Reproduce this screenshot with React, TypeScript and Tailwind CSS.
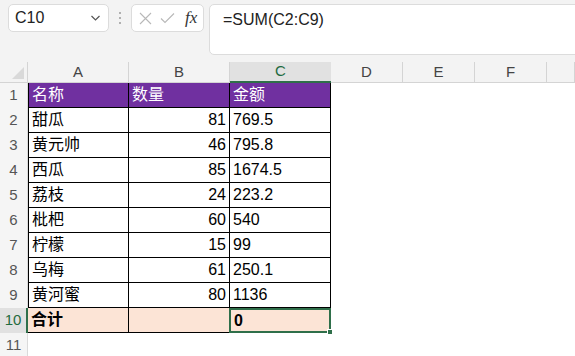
import React from 'react';

const font = '"Liberation Sans", "Noto Sans CJK SC", sans-serif';

type Row = { a: string; b: string; c: string };

const rows: Row[] = [
  { a: '甜瓜', b: '81', c: '769.5' },
  { a: '黄元帅', b: '46', c: '795.8' },
  { a: '西瓜', b: '85', c: '1674.5' },
  { a: '荔枝', b: '24', c: '223.2' },
  { a: '枇杷', b: '60', c: '540' },
  { a: '柠檬', b: '15', c: '99' },
  { a: '乌梅', b: '61', c: '250.1' },
  { a: '黄河蜜', b: '80', c: '1136' },
];

function RowHead({ n, active }: { n: number; active?: boolean }) {
  return (
    <div
      className={`h-[25px] flex items-center justify-center text-[15px] ${
        active
          ? 'bg-[#e1e1e1] text-[#1f6b40] border-r-2 border-[#2f6f4a]'
          : 'bg-[#f5f5f5] text-[#555] border-r border-[#dadada]'
      }`}
    >
      {n}
    </div>
  );
}

function Blank() {
  return <div className="h-[25px] bg-white" />;
}

export default function App() {
  return (
    <div className="w-[575px] h-[356px] overflow-hidden bg-white" style={{ fontFamily: font }}>
      {/* formula bar */}
      <div className="h-[62px] bg-[#f3f3f3] flex items-start pl-2 pt-1">
        <div className="shrink-0 w-[101px] h-[28px] bg-white border border-[#dcdcdc] rounded-[5px] flex items-center pl-[6px] pr-[7px] justify-between">
          <span className="text-[16px] text-[#222]">C10</span>
          <svg width="11" height="10" viewBox="0 0 11 10" fill="none" stroke="#555" strokeWidth="1.2">
            <path d="M1.5 3 L5.5 7 L9.5 3" />
          </svg>
        </div>
        <div className="shrink-0 w-[22px] h-[28px] flex flex-col items-center justify-center gap-[3px]">
          <span className="w-[2px] h-[2px] rounded-full bg-[#9a9a9a]" />
          <span className="w-[2px] h-[2px] rounded-full bg-[#9a9a9a]" />
          <span className="w-[2px] h-[2px] rounded-full bg-[#9a9a9a]" />
        </div>
        <div className="shrink-0 w-[73px] h-[28px] bg-white border border-[#dcdcdc] rounded-[5px] flex items-center pl-[7px] gap-[8px]">
          <svg width="13" height="13" viewBox="0 0 13 13" fill="none" stroke="#b8b8b8" strokeWidth="1.1">
            <path d="M1 1 L12 12 M12 1 L1 12" />
          </svg>
          <svg width="15" height="13" viewBox="0 0 15 13" fill="none" stroke="#b8b8b8" strokeWidth="1.1">
            <path d="M1 6.5 L5 10.5 L14 1.5" />
          </svg>
          <span className="text-[17px] italic text-[#333] ml-[2px]" style={{ fontFamily: '"Liberation Serif", serif' }}>
            fx
          </span>
        </div>
        <div className="shrink-0 ml-[5px] w-[380px] h-[51px] bg-white border border-[#dcdcdc] rounded-[5px] pl-[13px] pt-[3px] text-[16px] text-[#222]">
          =SUM(C2:C9)
        </div>
      </div>

      {/* grid */}
      <div className="grid grid-cols-[28px_101px_101px_101px_72px_72px_72px_1fr] bg-white">
        {/* column headers */}
        <div className="h-[21px] bg-[#f3f3f3] border-b border-r border-[#d4d4d4] flex items-end justify-end p-[3px]">
          <svg width="12" height="12" viewBox="0 0 12 12">
            <path d="M12 0 L12 12 L0 12 Z" fill="#d9d9d9" />
          </svg>
        </div>
        {['A', 'B', 'C', 'D', 'E', 'F', ''].map((l) =>
          l === 'C' ? (
            <div
              key={l}
              className="h-[21px] bg-[#e1e1e1] border-b-2 border-[#2f6f4a] flex items-center justify-center text-[15px] text-[#1f6b40]"
            >
              C
            </div>
          ) : (
            <div
              key={l || 'g'}
              className="h-[21px] bg-[#f3f3f3] border-b border-[#d4d4d4] border-r flex items-center justify-center text-[15px] text-[#444]"
            >
              {l}
            </div>
          ),
        )}

        {/* row 1 */}
        <RowHead n={1} />
        <div className="h-[25px] bg-[#7030a0] text-white border-l border-r border-b border-black pl-[3px] flex items-center text-[16px]">名称</div>
        <div className="h-[25px] bg-[#7030a0] text-white border-r border-b border-black pl-[3px] flex items-center text-[16px]">数量</div>
        <div className="h-[25px] bg-[#7030a0] text-white border-r border-b border-black pl-[3px] flex items-center text-[16px]">金额</div>
        <Blank />
        <Blank />
        <Blank />
        <Blank />

        {rows.map((r, i) => (
          <React.Fragment key={r.a}>
            <RowHead n={i + 2} />
            <div className="h-[25px] border-l border-r border-b border-black pl-[3px] flex items-center text-[16px] text-black">{r.a}</div>
            <div className="h-[25px] border-r border-b border-black pr-[3px] flex items-center justify-end text-[16px] text-black">{r.b}</div>
            <div className="h-[25px] border-r border-b border-black pl-[3px] flex items-center text-[16px] text-black">{r.c}</div>
            <Blank />
            <Blank />
            <Blank />
            <Blank />
          </React.Fragment>
        ))}

        {/* row 10 */}
        <RowHead n={10} active />
        <div className="h-[25px] bg-[#fce4d6] border-r border-b border-black pl-[3px] flex items-center text-[16px] font-bold text-black">合计</div>
        <div className="h-[25px] bg-[#fce4d6] border-r border-b border-black" />
        <div className="relative h-[25px] bg-[#fce4d6] border-2 border-[#2f6f4a] -ml-px pl-[3px] flex items-center text-[16px] font-bold text-black">
          0
          <span className="absolute -right-[4px] -bottom-[4px] w-[6px] h-[6px] bg-[#2f6f4a] border border-white" />
        </div>
        <Blank />
        <Blank />
        <Blank />
        <Blank />

        {/* row 11 */}
        <RowHead n={11} />
        <Blank />
        <Blank />
        <Blank />
        <Blank />
        <Blank />
        <Blank />
        <Blank />
      </div>
    </div>
  );
}
